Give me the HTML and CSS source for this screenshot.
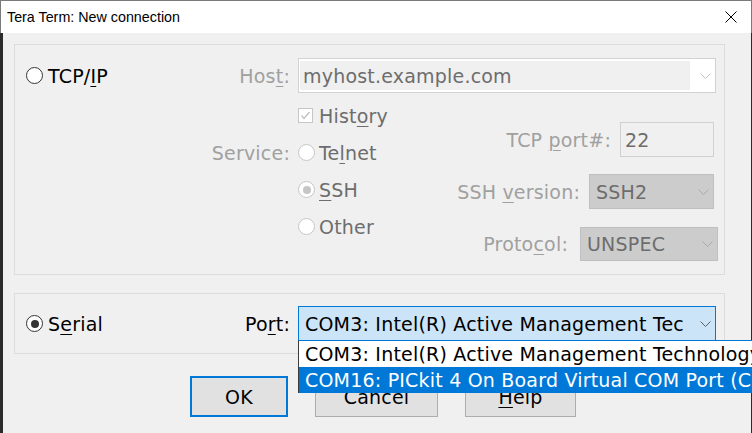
FILE: index.html
```html
<!DOCTYPE html>
<html>
<head>
<meta charset="utf-8">
<link rel="stylesheet" href="styles.css">
</head>
<body>
<div class="window">
  <div class="titlebar">
    <span class="title">Tera Term: New connection</span>
    <svg class="close" width="12" height="12" viewBox="0 0 12 12"><path d="M0.5 0.5 L11.5 11.5 M11.5 0.5 L0.5 11.5" stroke="#000" stroke-width="1" fill="none"/></svg>
  </div>
  <div class="client">
    <div class="group g1">
      <div class="row1">
        <div class="opt en"><span class="rb"></span><span>TCP/<u>I</u>P</span></div>
        <div class="field">
          <span class="lbl dis gap">Hos<u>t</u>:</span>
          <div class="combo host">
            <span class="edit">myhost.example.com</span>
            <svg class="chev" width="11" height="6" viewBox="0 0 11 6"><polyline points="0.5,0.5 5.5,5.5 10.5,0.5" stroke="#c2c2c2" fill="none"/></svg>
          </div>
        </div>
      </div>
      <div class="lower">
        <div class="svc-col"><span class="lbl dis">Service:</span></div>
        <div class="opt-col">
          <div class="opt"><span class="cb"><svg width="13" height="13" viewBox="0 0 13 13"><polyline points="2.5,6.5 5,9.5 10.5,3" stroke="#c0c0c0" stroke-width="1.3" fill="none"/></svg></span><span>Hist<u>o</u>ry</span></div>
          <div class="opt"><span class="rb dim"></span><span>Te<u>l</u>net</span></div>
          <div class="opt"><span class="rb dim checked"></span><span><u>S</u>SH</span></div>
          <div class="opt"><span class="rb dim"></span><span>Other</span></div>
        </div>
        <div class="right-col">
          <div class="rrow r-port">
            <span class="lbl dis">TCP <u>p</u>ort#:</span>
            <div class="tbox">22</div>
          </div>
          <div class="rrow r-ver">
            <span class="lbl dis">SSH <u>v</u>ersion:</span>
            <div class="dcombo ver">SSH2<svg class="chev" width="11" height="6" viewBox="0 0 11 6"><polyline points="0.5,0.5 5.5,5.5 10.5,0.5" stroke="#a9a9a9" fill="none"/></svg></div>
          </div>
          <div class="rrow r-proto">
            <span class="lbl dis">Proto<u>c</u>ol:</span>
            <div class="dcombo proto">UNSPEC<svg class="chev" width="11" height="6" viewBox="0 0 11 6"><polyline points="0.5,0.5 5.5,5.5 10.5,0.5" stroke="#a9a9a9" fill="none"/></svg></div>
          </div>
        </div>
      </div>
    </div>
    <div class="group g2">
      <div class="opt en"><span class="rb checked"></span><span>S<u>e</u>rial</span></div>
      <div class="field">
        <span class="lbl gap">Po<u>r</u>t:</span>
        <div class="combo port">
          <span class="ptext">COM3: Intel(R) Active Management Tec</span>
          <svg class="chev" width="11" height="6" viewBox="0 0 11 6"><polyline points="0.5,0.5 5.5,5.5 10.5,0.5" stroke="#606060" fill="none"/></svg>
        </div>
      </div>
    </div>
    <div class="buttons">
      <div class="btn ok">OK</div>
      <div class="btn cancel">Cancel</div>
      <div class="btn help"><span><u>H</u>elp</span></div>
    </div>
    <div class="dropdown">
      <div class="item">COM3: Intel(R) Active Management Technology - SOL (COM3)</div>
      <div class="item sel">COM16: PICkit 4 On Board Virtual COM Port (COM16)</div>
    </div>
  </div>
</div>
</body>
</html>
```

FILE: styles.css
```css
* { box-sizing: border-box; }
html, body { margin: 0; padding: 0; }
body {
  width: 752px;
  height: 433px;
  overflow: hidden;
  background: #2b2b2b;
  font-family: "DejaVu Sans", sans-serif;
  font-size: 19px;
  letter-spacing: 0.2px;
  color: #000;
}
u {
  text-decoration-thickness: 1px;
  text-underline-offset: 3px;
}
.window {
  width: 752px;
  height: 433px;
  display: flex;
  flex-direction: column;
}
.titlebar {
  height: 33px;
  flex: none;
  background: #fff;
  border-top: 1px solid #7a7a7a;
  border-left: 1px solid #7a7a7a;
  border-right: 1px solid #7a7a7a;
  display: flex;
  align-items: center;
  justify-content: space-between;
  padding: 0 14px 0 6px;
  font-family: "Liberation Sans", Arial, sans-serif;
  font-size: 14.3px;
  letter-spacing: 0;
}
.client {
  flex: 1;
  margin-left: 3px;
  margin-right: 1px;
  background: #f0f0f0;
  position: relative;
  padding: 11px 0 0 11px;
}
.group {
  width: 711px;
  border: 1px solid #dcdcdc;
}
.g1 { height: 231px; }
.row1 {
  display: flex;
  align-items: center;
  justify-content: space-between;
  height: 35px;
  margin-top: 13px;
  padding-left: 11px;
  padding-right: 8px;
}
.field { display: flex; align-items: center; }
.gap { margin-right: 8px; }
.lbl { white-space: nowrap; }
.dis { color: #a0a0a0; }
.combo {
  height: 35px;
  width: 418px;
  display: flex;
  align-items: center;
}
.combo.host {
  border: 1px solid #d2d2d2;
  background: #fff;
  padding: 2px 0 2px 1px;
}
.host .edit {
  width: 390px;
  height: 100%;
  background: #f0f0f0;
  color: #6d6d6d;
  padding-left: 3px;
  display: flex;
  align-items: center;
  white-space: nowrap;
}
.chev { margin-left: auto; margin-right: 4px; flex: none; }
.lower { display: flex; margin-top: 4px; }
.svc-col { width: 283px; padding-top: 37px; }
.svc-col .lbl {
  height: 37px;
  display: flex;
  align-items: center;
  justify-content: flex-end;
  padding-right: 8px;
}
.opt-col { display: flex; flex-direction: column; }
.opt {
  height: 37px;
  display: flex;
  align-items: center;
  gap: 4px;
  color: #6d6d6d;
  white-space: nowrap;
}
.opt.en { color: #000; height: auto; gap: 5px; }
.rb {
  width: 17px;
  height: 17px;
  border-radius: 50%;
  border: 1px solid #333;
  background: #fff;
  flex: none;
  display: flex;
  align-items: center;
  justify-content: center;
}
.rb.checked::after {
  content: "";
  width: 8px;
  height: 8px;
  border-radius: 50%;
  background: #333;
}
.rb.dim { border-color: #c6c6c6; }
.rb.dim.checked::after { background: #c6c6c6; }
.cb {
  width: 15px;
  height: 15px;
  border: 1px solid #c6c6c6;
  background: #fff;
  flex: none;
  display: flex;
  align-items: center;
  justify-content: center;
  margin-right: 2px;
}
.right-col {
  flex: 1;
  display: flex;
  flex-direction: column;
  align-items: flex-end;
  padding-top: 25px;
}
.rrow { display: flex; align-items: center; gap: 9px; }
.r-port { margin-right: 10px; }
.r-ver { margin-top: 17px; margin-right: 10px; }
.r-proto { margin-top: 18px; margin-right: 6px; gap: 12px; }
.tbox {
  width: 94px;
  height: 35px;
  border: 1px solid #d0d0d0;
  background: #f0f0f0;
  color: #6d6d6d;
  padding-left: 4px;
  display: flex;
  align-items: center;
}
.dcombo {
  height: 35px;
  background: #cccccc;
  border: 1px solid #bfbfbf;
  color: #6d6d6d;
  padding-left: 6px;
  display: flex;
  align-items: center;
}
.dcombo.ver { width: 125px; }
.dcombo.proto { width: 138px; height: 34px; }
.g2 {
  height: 61px;
  margin-top: 18px;
  display: flex;
  align-items: center;
  justify-content: space-between;
  padding-left: 11px;
  padding-right: 8px;
}
.combo.port {
  border: 1px solid #0078d7;
  background: #cce4f7;
  padding-left: 6px;
  white-space: nowrap;
}
.buttons {
  display: flex;
  gap: 27px;
  margin-top: 22px;
  padding-left: 176px;
}
.btn {
  height: 41px;
  background: #e1e1e1;
  border: 1px solid #adadad;
  display: flex;
  align-items: center;
  justify-content: center;
}
.btn.ok { width: 98px; border: 2px solid #0078d7; }
.btn.cancel { width: 123px; }
.btn.help { width: 111px; }
.dropdown {
  position: absolute;
  left: 295px;
  top: 307px;
  width: 480px;
  border-top: 1px solid #0078d7;
  border-left: 1px solid #3c3c3c;
  background: #fff;
}
.item {
  height: 26px;
  padding-left: 6px;
  display: flex;
  align-items: center;
  white-space: nowrap;
  color: #000;
}
.item.sel { background: #0078d7; color: #fff; }
```
